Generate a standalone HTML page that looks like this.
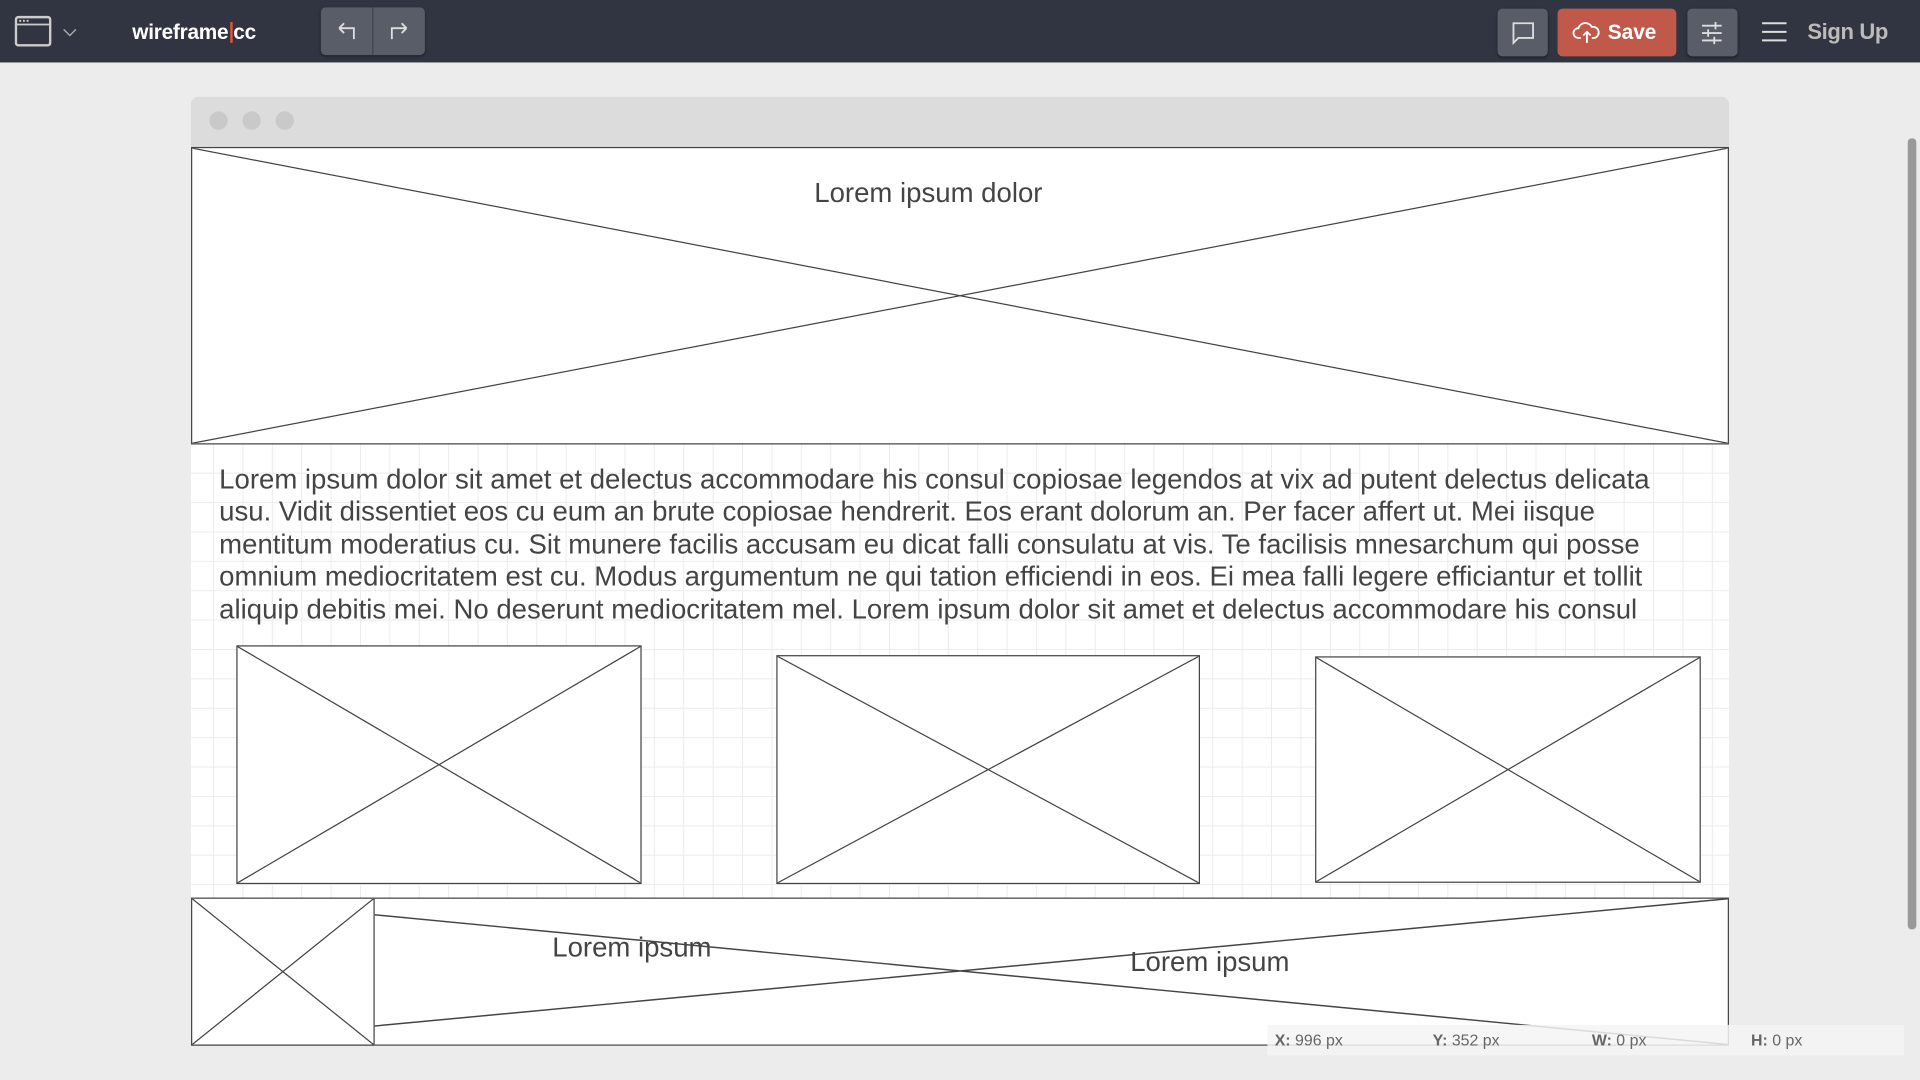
<!DOCTYPE html>
<html><head><meta charset="utf-8"><style>
*{margin:0;padding:0;box-sizing:border-box}
html,body{width:1920px;height:1080px;overflow:hidden;background:#ececec;font-family:"Liberation Sans",sans-serif}
#s{width:1568px;height:882px;transform:scale(1.22449);transform-origin:0 0;position:relative}
.a{position:absolute}
.hdr{left:0;top:0;width:1568px;height:51px;background:#303541}
.btn{background:#585d67;border-radius:4px;box-shadow:0 1px 2px rgba(0,0,0,.4)}
.grid{background-color:#fff;background-image:linear-gradient(#ececec 1px,transparent 1px),linear-gradient(90deg,#ececec 1px,transparent 1px);background-size:24px 24px;background-position:-6px 2px}
.box{background:#fff;border:1px solid #444}
.box svg{position:absolute;left:0;top:0;width:100%;height:100%}
.t{color:#444;font-size:22.5px;white-space:nowrap}
</style></head><body><div id="s">
<div class="a hdr"></div>
<svg class="a" style="left:12px;top:12px" width="30" height="27" viewBox="0 0 30 27"><rect x="1" y="2" width="28" height="23" rx="2" fill="none" stroke="#ccc" stroke-width="2"/><line x1="1" y1="8" x2="29" y2="8" stroke="#ccc" stroke-width="1.5"/><circle cx="4.5" cy="5" r=".9" fill="#ccc"/><circle cx="7.5" cy="5" r=".9" fill="#ccc"/><circle cx="10.5" cy="5" r=".9" fill="#ccc"/></svg>
<svg class="a" style="left:51px;top:23px" width="12" height="8"><path d="M1 1l5 5 5-5" fill="none" stroke="#aaa" stroke-width="1.2"/></svg>
<div class="a" style="left:108px;top:17px;color:#fff;font-weight:bold;font-size:17px;letter-spacing:-.2px">wireframe<span style="display:inline-block;width:2px;height:17px;background:#e0533d;vertical-align:-3px;margin:0 1px"></span>cc</div>
<div class="a btn" style="left:262px;top:6px;width:85px;height:39px"></div>
<div class="a" style="left:304px;top:6px;width:1px;height:39px;background:#3e434d"></div>
<svg class="a" style="left:274px;top:17px" width="20" height="18"><path d="M3 6h12v9M3 6l4-4M3 6l4 4" fill="none" stroke="#ddd" stroke-width="1.5"/></svg>
<svg class="a" style="left:315px;top:17px" width="20" height="18"><path d="M17 6H5v9M17 6l-4-4M17 6l-4 4" fill="none" stroke="#ddd" stroke-width="1.5"/></svg>
<div class="a btn" style="left:1223px;top:7px;width:41px;height:39px"></div>
<svg class="a" style="left:1234px;top:17px" width="20" height="20"><path d="M2 2h16v12H6l-4 4z" fill="none" stroke="#ddd" stroke-width="1.5"/></svg>
<div class="a" style="left:1272px;top:7px;width:97px;height:39px;background:#c0594a;border-radius:4px"></div>
<svg class="a" style="left:1284px;top:16px" width="24" height="20"><path d="M7 15H5a4 4 0 0 1 0-8 6 6 0 0 1 11-1 4.5 4.5 0 0 1 2 9h-2M12 19v-9M9 13l3-3 3 3" fill="none" stroke="#fff" stroke-width="1.5"/></svg>
<div class="a" style="left:1313px;top:17px;color:#fff;font-weight:bold;font-size:17px">Save</div>
<div class="a btn" style="left:1378px;top:7px;width:41px;height:39px"></div>
<svg class="a" style="left:1388px;top:17px" width="20" height="20"><path d="M2 4h16M2 10h16M2 16h16M13 1v6M7 7v6M12 13v6" fill="none" stroke="#ddd" stroke-width="1.5"/></svg>
<svg class="a" style="left:1438px;top:17px" width="22" height="18"><path d="M1 2h20M1 9h20M1 16h20" stroke="#ddd" stroke-width="1.6"/></svg>
<div class="a" style="left:1476px;top:16px;color:#bbb;font-weight:bold;font-size:18px;letter-spacing:-.3px">Sign Up</div>

<div class="a" style="left:156px;top:79px;width:1256px;height:41px;background:#dcdcdc;border-radius:6px 6px 0 0"></div>
<div class="a" style="left:171px;top:91px;width:15px;height:15px;border-radius:50%;background:#c9c9c9"></div>
<div class="a" style="left:198px;top:91px;width:15px;height:15px;border-radius:50%;background:#c9c9c9"></div>
<div class="a" style="left:225px;top:91px;width:15px;height:15px;border-radius:50%;background:#c9c9c9"></div>
<div class="a grid" style="left:156px;top:120px;width:1256px;height:734px"></div>

<div class="a box" style="left:156px;top:120px;width:1256px;height:243px"><svg viewBox="0 0 100 100" preserveAspectRatio="none"><path d="M0 0L100 100M100 0L0 100" stroke="#444" stroke-width="1" vector-effect="non-scaling-stroke"/></svg></div>
<div class="a t" style="left:665px;top:145px">Lorem ipsum dolor</div>
<div class="a t" style="left:179px;top:379px;line-height:26.4px">Lorem ipsum dolor sit amet et delectus accommodare his consul copiosae legendos at vix ad putent delectus delicata<br>usu. Vidit dissentiet eos cu eum an brute copiosae hendrerit. Eos erant dolorum an. Per facer affert ut. Mei iisque<br>mentitum moderatius cu. Sit munere facilis accusam eu dicat falli consulatu at vis. Te facilisis mnesarchum qui posse<br>omnium mediocritatem est cu. Modus argumentum ne qui tation efficiendi in eos. Ei mea falli legere efficiantur et tollit<br>aliquip debitis mei. No deserunt mediocritatem mel. Lorem ipsum dolor sit amet et delectus accommodare his consul</div>

<div class="a box" style="left:193px;top:527px;width:331px;height:195px"><svg viewBox="0 0 100 100" preserveAspectRatio="none"><path d="M0 0L100 100M100 0L0 100" stroke="#444" vector-effect="non-scaling-stroke"/></svg></div>
<div class="a box" style="left:634px;top:535px;width:346px;height:187px"><svg viewBox="0 0 100 100" preserveAspectRatio="none"><path d="M0 0L100 100M100 0L0 100" stroke="#444" vector-effect="non-scaling-stroke"/></svg></div>
<div class="a box" style="left:1074px;top:536px;width:315px;height:185px"><svg viewBox="0 0 100 100" preserveAspectRatio="none"><path d="M0 0L100 100M100 0L0 100" stroke="#444" vector-effect="non-scaling-stroke"/></svg></div>

<div class="a box" style="left:156px;top:733px;width:1256px;height:121px"></div>
<svg class="a" style="left:156px;top:733px" width="1256" height="121"><path d="M149 14L1255 120M149 105L1255 1" stroke="#444" stroke-width="1.2" fill="none"/></svg>
<div class="a box" style="left:156px;top:733px;width:150px;height:121px"><svg viewBox="0 0 100 100" preserveAspectRatio="none"><path d="M0 0L100 100M100 0L0 100" stroke="#444" vector-effect="non-scaling-stroke"/></svg></div>
<div class="a t" style="left:451px;top:761px">Lorem ipsum</div>
<div class="a t" style="left:923px;top:773px">Lorem ipsum</div>

<div class="a" style="left:1558px;top:113px;width:7px;height:646px;background:#999;border-radius:3px"></div>
<div class="a" style="left:1035px;top:837px;width:520px;height:25px;background:rgba(245,245,245,.85)"></div>
<div class="a" style="left:1041px;top:842px;font-size:13px;color:#666"><b>X:</b> 996 px</div>
<div class="a" style="left:1170px;top:842px;font-size:13px;color:#666"><b>Y:</b> 352 px</div>
<div class="a" style="left:1300px;top:842px;font-size:13px;color:#666"><b>W:</b> 0 px</div>
<div class="a" style="left:1430px;top:842px;font-size:13px;color:#666"><b>H:</b> 0 px</div>
</div></body></html>
